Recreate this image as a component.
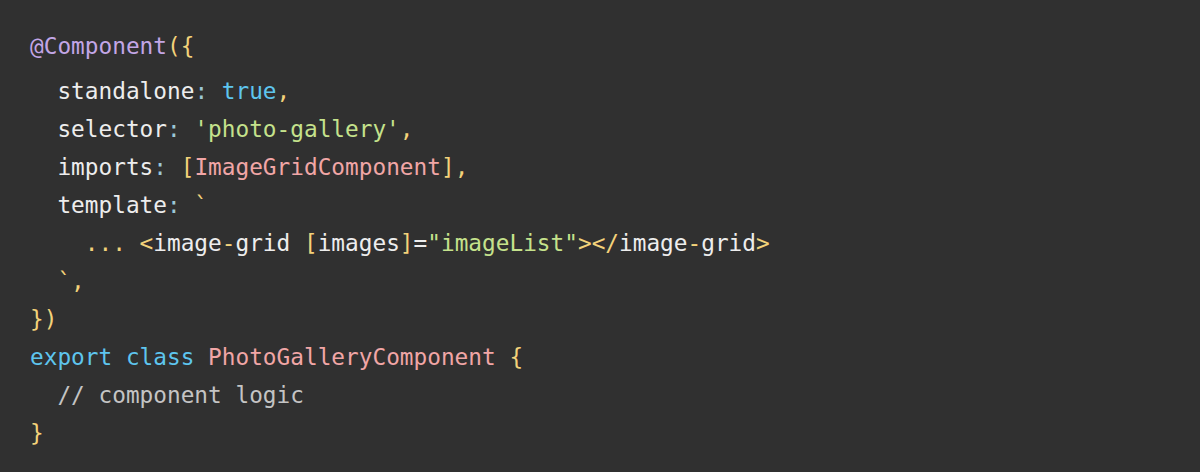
import React from "react";

const W = ({ children }) => <span className="text-[#ededed]">{children}</span>;
const Y = ({ children }) => <span className="text-[#f3d27a]">{children}</span>;
const C = ({ children }) => <span className="text-[#9cc7d6]">{children}</span>;
const B = ({ children }) => <span className="text-[#5ec5ee]">{children}</span>;
const G = ({ children }) => <span className="text-[#c5e28c]">{children}</span>;
const P = ({ children }) => <span className="text-[#f1a6a6]">{children}</span>;
const V = ({ children }) => <span className="text-[#c3a6e6]">{children}</span>;

export default function App() {
  return (
    <div className="w-[1200px] h-[472px] bg-[#303030] overflow-hidden">
      <pre
        className="pl-[30px] pt-[27px] text-[22.75px] leading-[38px] whitespace-pre"
        style={{ fontFamily: '"DejaVu Sans Mono", "Liberation Mono", monospace' }}
      >
        <div className="mb-[7px]">
          <V>@Component</V>
          <Y>({"{"}</Y>
        </div>
        <div>
          <W>{"  standalone"}</W>
          <C>:</C>
          <B>{" true"}</B>
          <Y>,</Y>
        </div>
        <div>
          <W>{"  selector"}</W>
          <C>:</C>
          <G>{" 'photo-gallery'"}</G>
          <Y>,</Y>
        </div>
        <div>
          <W>{"  imports"}</W>
          <C>:</C>
          <Y>{" ["}</Y>
          <P>ImageGridComponent</P>
          <Y>],</Y>
        </div>
        <div>
          <W>{"  template"}</W>
          <C>:</C>
          <Y>{" `"}</Y>
        </div>
        <div>
          <Y>{"    ... <"}</Y>
          <W>image</W>
          <Y>-</Y>
          <W>grid</W>
          <Y>{" ["}</Y>
          <W>images</W>
          <Y>]</Y>
          <W>=</W>
          <G>"imageList"</G>
          <Y>{"></"}</Y>
          <W>image</W>
          <Y>-</Y>
          <W>grid</W>
          <Y>{">"}</Y>
        </div>
        <div>
          <Y>{"  `,"}</Y>
        </div>
        <div>
          <Y>{"})"}</Y>
        </div>
        <div>
          <B>export class</B>
          <P>{" PhotoGalleryComponent"}</P>
          <Y>{" {"}</Y>
        </div>
        <div>
          <span className="text-[#c4c4c4]">{"  // component logic"}</span>
        </div>
        <div>
          <Y>{"}"}</Y>
        </div>
      </pre>
    </div>
  );
}
